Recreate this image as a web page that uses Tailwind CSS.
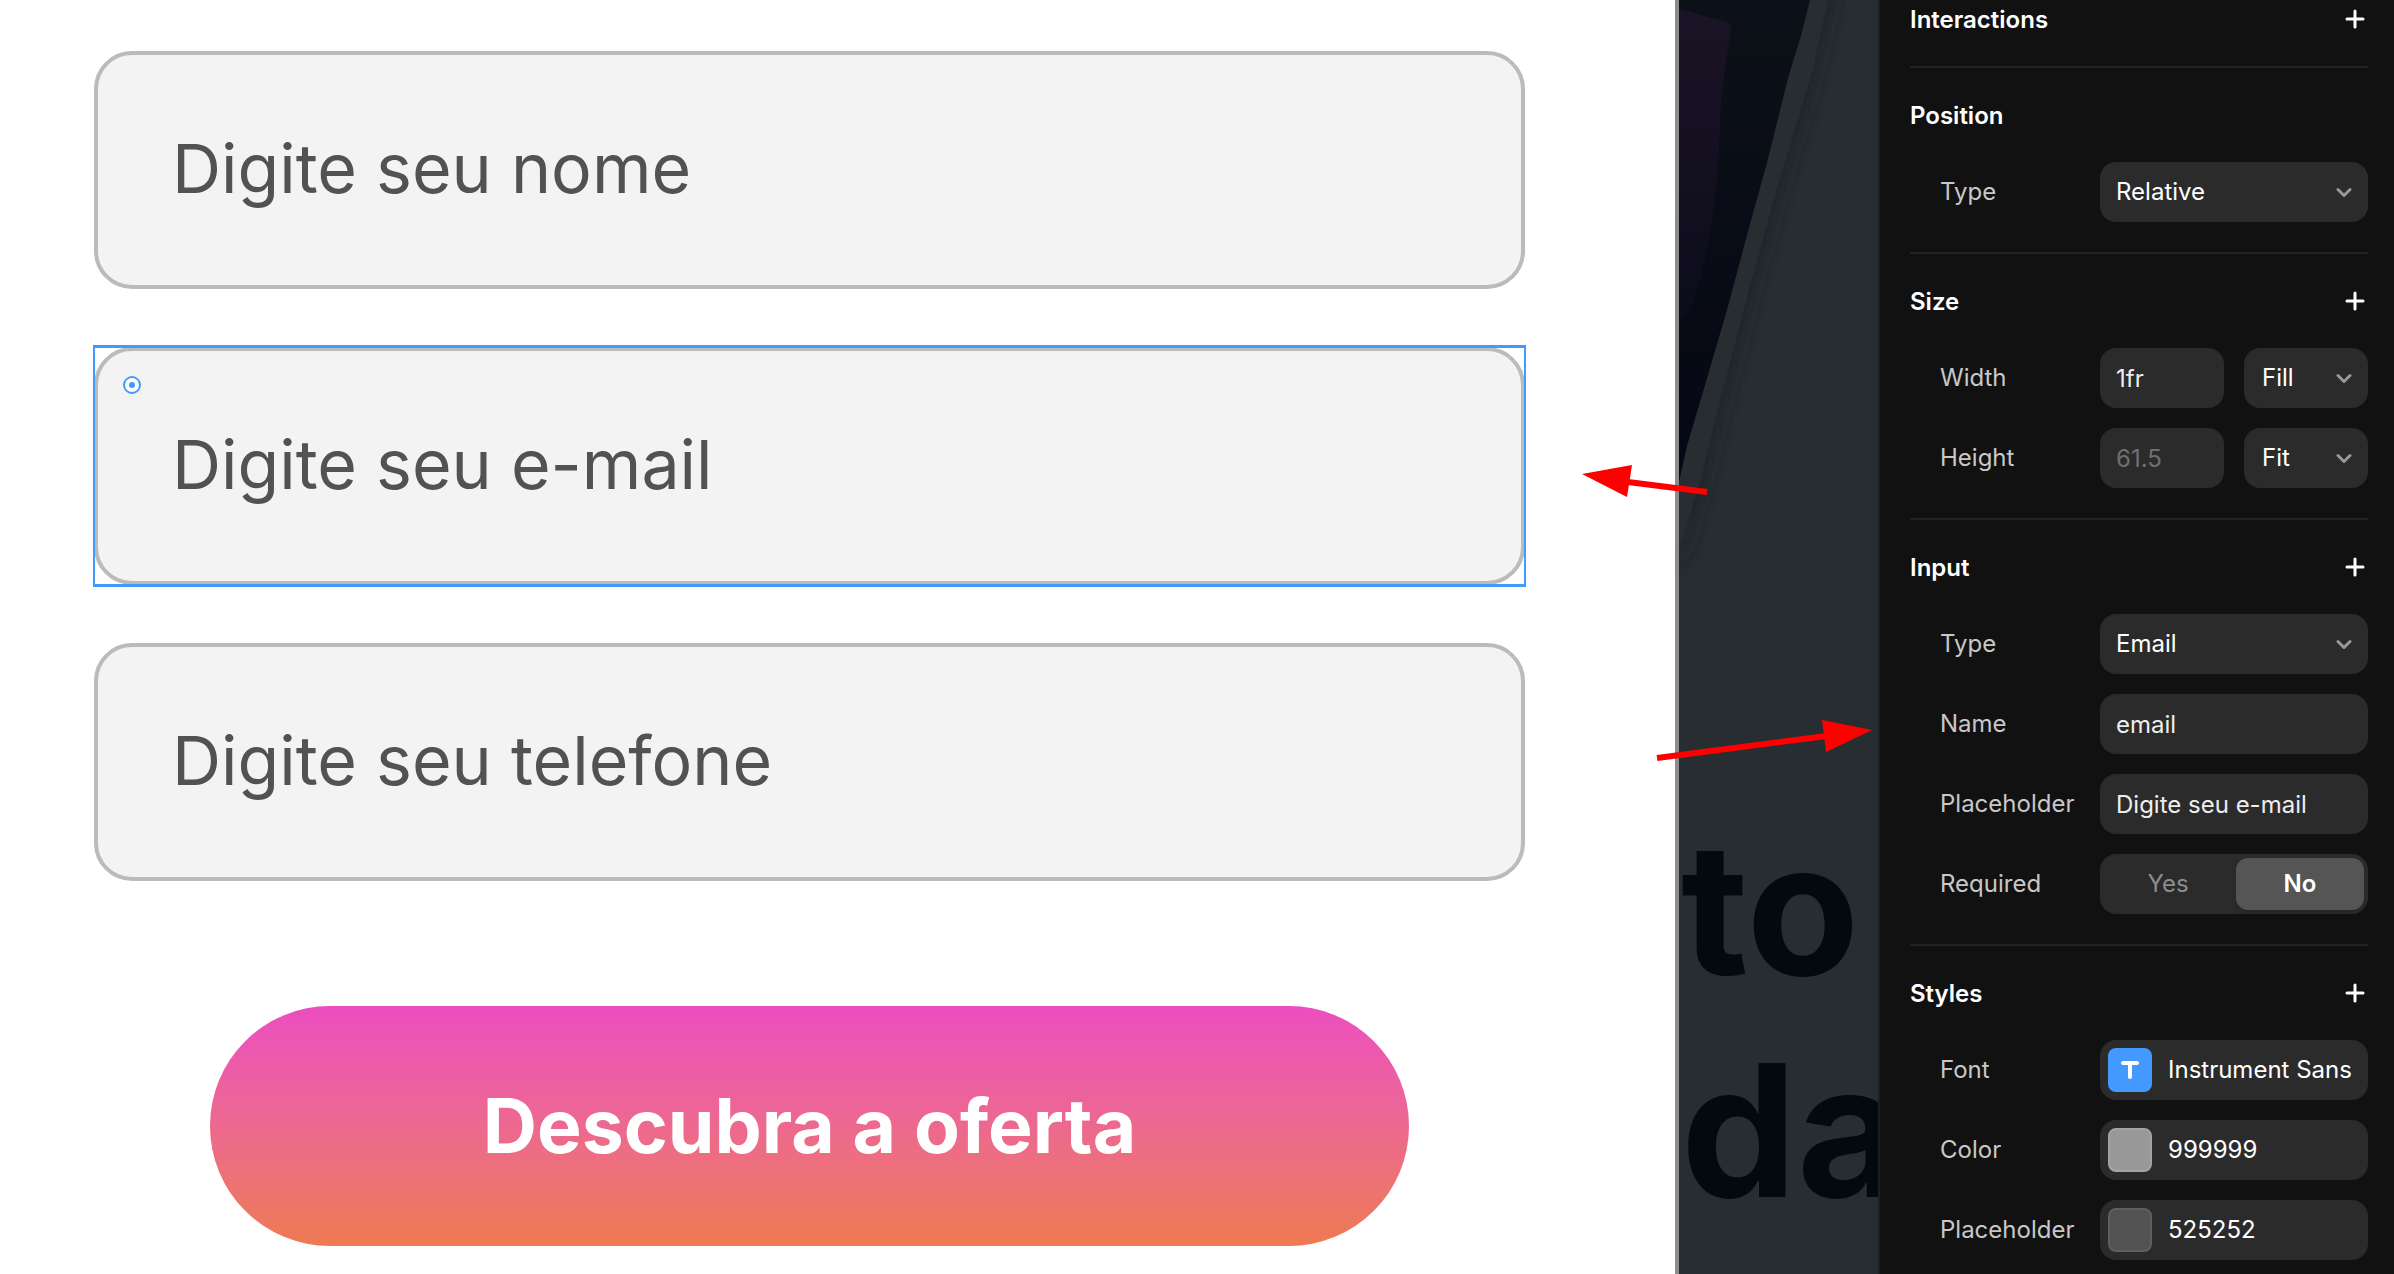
<!DOCTYPE html>
<html lang="pt-BR">

<head>
  <meta charset="UTF-8">
  <meta name="viewport" content="width=device-width, initial-scale=1.0">
  <script src="https://cdn.jsdelivr.net/npm/@tailwindcss/browser@4"></script>
  <title>Formulário</title>
</head>

<body class="font-['Inter',sans-serif]">
  <div class="flex h-screen w-full overflow-hidden bg-[#282d31]">

    <!-- Form -->
    <main class="flex-1 bg-white border-r-4 border-[#8c8c8c] pl-[94px] pr-[150px] pt-[51px]">
      <form>
        <div class="flex flex-col gap-[58px]">
          <input type="text" aria-label="Nome" placeholder="Digite seu nome"
            class="w-full h-[238px] rounded-[38px] border-4 border-[#bbbbbb] bg-[#f3f3f3] px-[74px] pb-1 text-[68px] placeholder:text-[#525252]">
          <div class="relative">
            <input type="email" aria-label="E-mail" placeholder="Digite seu e-mail"
              class="block w-full h-[238px] rounded-[38px] border-4 border-[#bbbbbb] bg-[#f3f3f3] px-[74px] pb-1 text-[68px] placeholder:text-[#525252]">
            <div class="absolute -inset-x-px -inset-y-0.5 border-x-2 border-y-3 border-[#4499ff] pointer-events-none"></div>
            <svg class="absolute left-7 top-7" width="20" height="20" viewBox="0 0 20 20">
              <circle cx="10" cy="10" r="8" fill="#fff" stroke="#4499ff" stroke-width="2" />
              <circle cx="10" cy="10" r="3" fill="#4499ff" />
            </svg>
          </div>
          <input type="tel" aria-label="Telefone" placeholder="Digite seu telefone"
            class="w-full h-[238px] rounded-[38px] border-4 border-[#bbbbbb] bg-[#f3f3f3] px-[74px] pb-1 text-[68px] placeholder:text-[#525252]">
        </div>
        <div class="mt-[125px] px-[116px]">
          <button type="button"
            class="w-full h-60 rounded-full bg-linear-to-b from-[#ec4dc0] to-[#ee7a50] text-white text-[75px] font-bold">Descubra a oferta</button>
        </div>
      </form>
    </main>

    <!-- Page behind -->
    <div class="relative w-[199px]">
      <svg class="absolute left-0 top-0" width="199" height="600" viewBox="0 0 199 600">
        <defs>
          <linearGradient id="dark" x1="0" y1="0" x2="0" y2="1">
            <stop offset="0" stop-color="#0c1017" />
            <stop offset="1" stop-color="#050815" />
          </linearGradient>
          <linearGradient id="purple" x1="0" y1="0" x2="0" y2="1">
            <stop offset="0" stop-color="#1b1426" />
            <stop offset="1" stop-color="#0c0c1b" />
          </linearGradient>
          <filter id="soft" x="-50%" y="-10%" width="200%" height="120%">
            <feGaussianBlur stdDeviation="9" />
          </filter>
        </defs>
        <path d="M0 -20H158L130 96L102 188L75 286L45 400L25 482L0 572Z" fill="#1e2326" filter="url(#soft)" />
        <path d="M0 0H149L141 36Q134 72 126 96L98 188L71 286L41 400L21 482L0 551Z" fill="#282d31" />
        <path d="M0 0H131L122 36L109 78L88 163L71 224L48 310L24 392L8 446L0 482Z" fill="url(#dark)" />
        <path d="M0 9L48 22Q53 24 52 32Q43 75 41 122Q39 185 31 233Q24 275 14 302L0 327Z" fill="url(#purple)" />
      </svg>
      <div class="h-full pl-0.5 pt-[797px] overflow-hidden text-[#04090d] text-[184px] leading-[222px] font-bold">
        <p>to</p>
        <p>da</p>
      </div>
      <!-- Arrows -->
      <svg class="absolute -left-[99px] top-[440px] z-10" width="300" height="340" viewBox="1580 440 300 340">
        <g fill="#ff0000" stroke="#ff0000">
          <path d="M1707 492L1628 482" stroke-width="6" />
          <path d="M1582 474L1632 465L1627 497Z" stroke="none" />
          <path d="M1657 758L1826 736" stroke-width="6" />
          <path d="M1872 730L1822 720L1826 752Z" stroke="none" />
        </g>
      </svg>
    </div>

    <!-- Properties panel -->
    <aside class="w-[516px] overflow-hidden border-l-2 border-[#1d1d1d] bg-[#111111] pl-[30px] pr-[26px] text-2xl text-white">
      <section class="border-b-2 border-[#232323] pb-7">
        <div class="flex h-[38px] items-center justify-between">
          <h2 class="pt-0.5 font-semibold">Interactions</h2>
          <button type="button" aria-label="Add interaction" class="mr-[3px]">
            <svg width="20" height="20" viewBox="0 0 20 20" fill="none" stroke="#fff" stroke-width="3" stroke-linecap="round"><path d="M10 2V18M2 10H18" /></svg>
          </button>
        </div>
      </section>

      <section class="border-b-2 border-[#232323] pb-[30px]">
        <h2 class="flex h-[94px] items-center pt-0.5 font-semibold">Position</h2>
        <div class="flex items-center justify-between pl-[30px]">
          <label for="position-type" class="text-[#c8c8c8]">Type</label>
          <div class="relative w-[268px]">
            <select id="position-type" class="block h-[60px] w-full appearance-none rounded-2xl bg-[#2b2b2b] px-4">
              <option>Relative</option>
            </select>
            <svg class="absolute right-4 top-6 pointer-events-none" width="16" height="12" viewBox="0 0 16 12" fill="none" stroke="#999" stroke-width="3" stroke-linecap="round" stroke-linejoin="round"><path d="M2 3.500L8 9.500L14 3.500" /></svg>
          </div>
        </div>
      </section>

      <section class="border-b-2 border-[#232323] pb-[30px]">
        <div class="flex h-[94px] items-center justify-between">
          <h2 class="pt-0.5 font-semibold">Size</h2>
          <button type="button" aria-label="Add size" class="mr-[3px]">
            <svg width="20" height="20" viewBox="0 0 20 20" fill="none" stroke="#fff" stroke-width="3" stroke-linecap="round"><path d="M10 2V18M2 10H18" /></svg>
          </button>
        </div>
        <div class="flex flex-col gap-5 pl-[30px]">
          <div class="flex items-center justify-between">
            <label for="width" class="text-[#c8c8c8]">Width</label>
            <div class="grid w-[268px] grid-cols-2 gap-5">
              <input id="width" type="text" value="1fr" class="h-[60px] w-full rounded-2xl bg-[#2b2b2b] px-4 text-[#eeeeee]">
              <div class="relative">
                <select aria-label="Width mode" class="block h-[60px] w-full appearance-none rounded-2xl bg-[#2b2b2b] pl-[18px]">
                  <option>Fill</option>
                </select>
                <svg class="absolute right-4 top-6 pointer-events-none" width="16" height="12" viewBox="0 0 16 12" fill="none" stroke="#999" stroke-width="3" stroke-linecap="round" stroke-linejoin="round"><path d="M2 3.500L8 9.500L14 3.500" /></svg>
              </div>
            </div>
          </div>
          <div class="flex items-center justify-between">
            <label for="height" class="text-[#c8c8c8]">Height</label>
            <div class="grid w-[268px] grid-cols-2 gap-5">
              <input id="height" type="text" value="61.5" class="h-[60px] w-full rounded-2xl bg-[#2b2b2b] px-4 text-[#6f6f6f]">
              <div class="relative">
                <select aria-label="Height mode" class="block h-[60px] w-full appearance-none rounded-2xl bg-[#2b2b2b] pl-[18px]">
                  <option>Fit</option>
                </select>
                <svg class="absolute right-4 top-6 pointer-events-none" width="16" height="12" viewBox="0 0 16 12" fill="none" stroke="#999" stroke-width="3" stroke-linecap="round" stroke-linejoin="round"><path d="M2 3.500L8 9.500L14 3.500" /></svg>
              </div>
            </div>
          </div>
        </div>
      </section>

      <section class="border-b-2 border-[#232323] pb-[30px]">
        <div class="flex h-[94px] items-center justify-between">
          <h2 class="pt-0.5 font-semibold">Input</h2>
          <button type="button" aria-label="Add input option" class="mr-[3px]">
            <svg width="20" height="20" viewBox="0 0 20 20" fill="none" stroke="#fff" stroke-width="3" stroke-linecap="round"><path d="M10 2V18M2 10H18" /></svg>
          </button>
        </div>
        <div class="flex flex-col gap-5 pl-[30px]">
          <div class="flex items-center justify-between">
            <label for="input-type" class="text-[#c8c8c8]">Type</label>
            <div class="relative w-[268px]">
              <select id="input-type" class="block h-[60px] w-full appearance-none rounded-2xl bg-[#2b2b2b] px-4">
                <option>Email</option>
              </select>
              <svg class="absolute right-4 top-6 pointer-events-none" width="16" height="12" viewBox="0 0 16 12" fill="none" stroke="#999" stroke-width="3" stroke-linecap="round" stroke-linejoin="round"><path d="M2 3.500L8 9.500L14 3.500" /></svg>
            </div>
          </div>
          <div class="flex items-center justify-between">
            <label for="input-name" class="text-[#c8c8c8]">Name</label>
            <input id="input-name" type="text" value="email" class="h-[60px] w-[268px] rounded-2xl bg-[#2b2b2b] px-4 text-[#eeeeee]">
          </div>
          <div class="flex items-center justify-between">
            <label for="input-placeholder" class="text-[#c8c8c8]">Placeholder</label>
            <input id="input-placeholder" type="text" value="Digite seu e-mail" class="h-[60px] w-[268px] rounded-2xl bg-[#2b2b2b] px-4 text-[#eeeeee]">
          </div>
          <fieldset class="flex items-center justify-between">
            <legend class="sr-only">Required</legend>
            <span class="text-[#c8c8c8]">Required</span>
            <div class="grid h-[60px] w-[268px] grid-cols-2 gap-1 rounded-2xl bg-[#2b2b2b] p-1">
              <label class="relative flex items-center justify-center rounded-xl text-[#8c8c8c]">
                <input type="radio" name="required" class="absolute inset-0 appearance-none">Yes
              </label>
              <label class="relative flex items-center justify-center rounded-xl bg-[#555555] font-semibold shadow-md">
                <input type="radio" name="required" class="absolute inset-0 appearance-none" checked>No
              </label>
            </div>
          </fieldset>
        </div>
      </section>

      <section>
        <div class="flex h-[94px] items-center justify-between">
          <h2 class="pt-0.5 font-semibold">Styles</h2>
          <button type="button" aria-label="Add style" class="mr-[3px]">
            <svg width="20" height="20" viewBox="0 0 20 20" fill="none" stroke="#fff" stroke-width="3" stroke-linecap="round"><path d="M10 2V18M2 10H18" /></svg>
          </button>
        </div>
        <div class="flex flex-col gap-5 pl-[30px]">
          <div class="flex items-center justify-between">
            <span class="text-[#c8c8c8]">Font</span>
            <button type="button" class="flex h-[60px] w-[268px] items-center gap-4 rounded-2xl bg-[#2b2b2b] px-2 whitespace-nowrap">
              <span class="flex size-11 shrink-0 items-center justify-center rounded-lg bg-[#4499ff]">
                <svg width="20" height="20" viewBox="0 0 20 20" fill="none" stroke="#fff" stroke-width="4" stroke-linecap="round"><path d="M3 3H17M10 3V17" /></svg>
              </span>
              Instrument Sans
            </button>
          </div>
          <div class="flex items-center justify-between">
            <span class="text-[#c8c8c8]">Color</span>
            <button type="button" class="flex h-[60px] w-[268px] items-center gap-4 rounded-2xl bg-[#2b2b2b] px-2">
              <span class="size-11 rounded-lg border-2 border-[#a3a3a3] bg-[#999999]"></span>
              999999
            </button>
          </div>
          <div class="flex items-center justify-between">
            <span class="text-[#c8c8c8]">Placeholder</span>
            <button type="button" class="flex h-[60px] w-[268px] items-center gap-4 rounded-2xl bg-[#2b2b2b] px-2">
              <span class="size-11 rounded-lg border-2 border-[#5e5e5e] bg-[#525252]"></span>
              525252
            </button>
          </div>
        </div>
      </section>
    </aside>

  </div>
</body>

</html>
